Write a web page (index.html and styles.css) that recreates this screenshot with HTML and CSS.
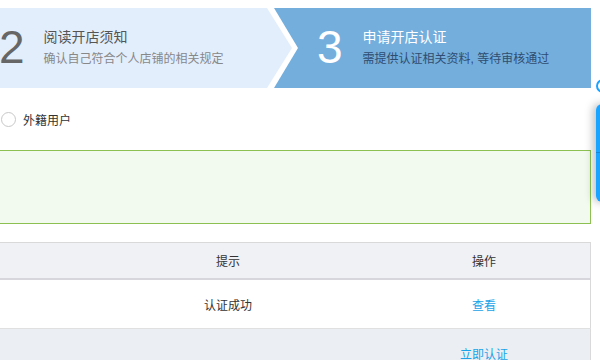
FILE: index.html
```html
<!DOCTYPE html>
<html lang="zh-CN">
<head>
    <meta charset="UTF-8">
    <meta name="viewport" content="width=device-width, initial-scale=1.0">
    <title>申请开店认证</title>
    <link rel="stylesheet" href="styles.css">
</head>
<body>

<div class="page">
    <div class="steps">
        <div class="step step-done">
            <span class="step-num">2</span>
            <div class="step-text">
                <div class="step-title">阅读开店须知</div>
                <div class="step-desc">确认自己符合个人店铺的相关规定</div>
            </div>
        </div>
        <svg class="step-arrow" width="38" height="80" viewBox="0 0 38 80">
            <rect x="0" y="0" width="38" height="80" fill="#74aedd"/>
            <polygon points="0,0 12,0 36,40 12,80 0,80" fill="#ffffff"/>
            <polygon points="0,0 5,0 30,40 5,80 0,80" fill="#e2eefc"/>
        </svg>
        <div class="step step-current">
            <span class="step-num">3</span>
            <div class="step-text">
                <div class="step-title">申请开店认证</div>
                <div class="step-desc">需提供认证相关资料, 等待审核通过</div>
            </div>
        </div>
    </div>

    <label class="radio-row">
        <span class="radio"></span>
        <span>外籍用户</span>
    </label>

    <div class="notice"></div>

    <table class="result-table">
        <thead>
            <tr>
                <th class="col-a"></th>
                <th class="col-b">提示</th>
                <th>操作</th>
            </tr>
        </thead>
        <tbody>
            <tr>
                <td></td>
                <td>认证成功</td>
                <td><a href="#">查看</a></td>
            </tr>
            <tr class="row-alt">
                <td></td>
                <td></td>
                <td><a href="#">立即认证</a></td>
            </tr>
        </tbody>
    </table>
</div>

<div class="side-dot"></div>
<div class="side-tool"></div>

</body>
</html>
```

FILE: styles.css
```css
body {
    margin: 0;
    font-family: "Liberation Sans", "Noto Sans CJK SC", sans-serif;
    font-size: 12px;
    color: #333;
    background: #fff;
    overflow: hidden;
}
.page {
    width: 591px;
}
.steps {
    display: flex;
    height: 80px;
    margin-top: 8px;
}
.step {
    display: flex;
    align-items: center;
    gap: 20px;
}
.step-done {
    width: 262px;
    background-color: #e2eefc;
}
.step-current {
    flex: 1;
    padding-left: 17px;
    background-color: #74aedd;
}
.step-arrow {
    display: block;
    flex-shrink: 0;
}
.step-num {
    font-family: "Liberation Sans", sans-serif;
    font-size: 46px;
    line-height: 46px;
    color: #666;
    margin-top: -2px;
}
.step-done .step-num {
    margin-left: -1px;
}
.step-done .step-text {
    margin-left: -1px;
}
.step-text {
    display: flex;
    flex-direction: column;
    gap: 2px;
}
.step-title {
    font-size: 14px;
    line-height: 20px;
    color: #555;
}
.step-desc {
    font-size: 12px;
    line-height: 20px;
    color: #888;
}
.step-current .step-num,
.step-current .step-title {
    color: #fff;
}
.step-current .step-desc {
    color: #2f4d70;
}
.radio-row {
    display: flex;
    align-items: center;
    gap: 7px;
    height: 20px;
    margin-top: 21px;
    padding-left: 1px;
    color: #333;
}
.radio {
    width: 13px;
    height: 13px;
    border: 1px solid #c8c8c8;
    border-radius: 50%;
    background: #fff;
}
.notice {
    height: 72px;
    margin: 21px 0 0 -1px;
    border: 1px solid #8cc152;
    background-color: #f2f9ee;
}
.result-table {
    width: 592px;
    margin: 18px 0 0 -1px;
    border-collapse: collapse;
    table-layout: fixed;
    border: 1px solid #d9d9d9;
    border-bottom: none;
}
.col-a {
    width: 78px;
}
.col-b {
    width: 300px;
}
.result-table th {
    height: 35px;
    padding: 0;
    font-weight: normal;
    color: #333;
    background-color: #f0f1f5;
    border-bottom: 2px solid #d6d6dc;
}
.result-table td {
    height: 48px;
    padding: 0;
    text-align: center;
    color: #333;
    border-bottom: 1px solid #e0e0e0;
}
.result-table .row-alt td {
    background-color: #ebeff4;
}
.result-table a {
    color: #1aa3e8;
    text-decoration: none;
}
.side-dot {
    position: absolute;
    left: 596px;
    top: 79px;
    width: 10px;
    height: 10px;
    border: 2px solid #1aa3ff;
    border-radius: 50%;
}
.side-tool {
    position: absolute;
    left: 596px;
    top: 104px;
    width: 24px;
    height: 98px;
    border-radius: 6px;
    background: linear-gradient(#1aa3ff 0, #1aa3ff 48px, #1386d6 48px, #1386d6 49px, #1aa3ff 49px);
    box-shadow: -3px 0 8px rgba(0, 0, 0, 0.25);
}
```
